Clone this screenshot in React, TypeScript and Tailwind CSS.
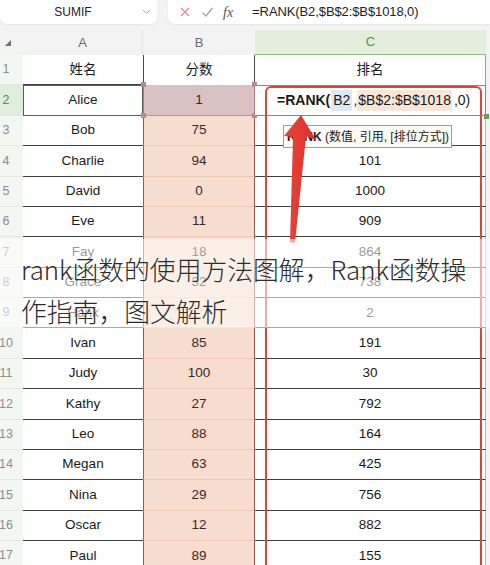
import React from "react";

type Row = { n: number; a: string; b: string; c: string };

const rows: Row[] = [
  { n: 3, a: "Bob", b: "75", c: "" },
  { n: 4, a: "Charlie", b: "94", c: "101" },
  { n: 5, a: "David", b: "0", c: "1000" },
  { n: 6, a: "Eve", b: "11", c: "909" },
  { n: 7, a: "Fay", b: "18", c: "864" },
  { n: 8, a: "Grace", b: "32", c: "738" },
  { n: 9, a: "Hank", b: "", c: "2" },
  { n: 10, a: "Ivan", b: "85", c: "191" },
  { n: 11, a: "Judy", b: "100", c: "30" },
  { n: 12, a: "Kathy", b: "27", c: "792" },
  { n: 13, a: "Leo", b: "88", c: "164" },
  { n: 14, a: "Megan", b: "63", c: "425" },
  { n: 15, a: "Nina", b: "29", c: "756" },
  { n: 16, a: "Oscar", b: "12", c: "882" },
  { n: 17, a: "Paul", b: "89", c: "155" },
];

function RowNum({ n, active }: { n: number; active?: boolean }) {
  return (
    <div
      className={`h-full flex items-center border-b border-[#e3e8e2] ${
        active ? "bg-[#dfeddb] text-[#5b8f4a]" : "bg-[#f3f7f2] text-[#8a8f8a]"
      }`}
    >
      <div className="w-[12px] flex justify-center text-[12.5px] leading-none whitespace-nowrap">{n}</div>
    </div>
  );
}

export default function App() {
  return (
    <div
      className="relative w-[490px] h-[565px] overflow-hidden bg-[#f2f3f2]"
      style={{ fontFamily: '"Liberation Sans", "Noto Sans CJK SC", sans-serif' }}
    >
      {/* Toolbar */}
      <div className="flex h-[24px] gap-[11px]">
        <div className="w-[157px] h-full bg-white rounded-b-[7px] shadow-[0_1px_2px_rgba(0,0,0,0.06)] flex items-center relative">
          <div className="flex-1 text-center text-[12px] text-[#222] pl-[4px]">SUMIF</div>
          <svg width="9" height="6" viewBox="0 0 9 6" className="mr-[6px]">
            <path d="M1 1 L4.5 4.5 L8 1" fill="none" stroke="#b0b0b0" strokeWidth="1" />
          </svg>
        </div>
        <div className="flex-1 h-full bg-white rounded-bl-[7px] shadow-[0_1px_2px_rgba(0,0,0,0.06)] flex items-center">
          <svg width="12" height="12" viewBox="0 0 12 12" className="ml-[11px]">
            <path d="M2 2 L10 10 M10 2 L2 10" stroke="#e08a8a" strokeWidth="1.3" />
          </svg>
          <svg width="13" height="12" viewBox="0 0 13 12" className="ml-[10px]">
            <path d="M1.5 6.5 L5 10 L11.5 2" fill="none" stroke="#a0a8a0" strokeWidth="1.3" />
          </svg>
          <span
            className="ml-[9px] text-[14px] italic text-[#555]"
            style={{ fontFamily: '"Liberation Serif", serif' }}
          >
            fx
          </span>
          <span className="ml-[19px] text-[13px] text-[#222] tracking-[-0.1px]">=RANK(B2,$B$2:$B$1018,0)</span>
        </div>
      </div>

      {/* Column headers */}
      <div className="mt-[6px] grid grid-cols-[23px_120px_112px_231px_4px] h-[25px] text-[13px]">
        <div className="flex items-center pl-[5px]">
          <svg width="6" height="6" viewBox="0 0 6 6">
            <path d="M6 0 L6 6 L0 6 Z" fill="#6f736f" />
          </svg>
        </div>
        <div className="flex items-center justify-center text-[#6b6b6b] border-r border-[#e2e4e2]">A</div>
        <div className="flex items-center justify-center text-[#6b6b6b]">B</div>
        <div className="flex items-center justify-center text-[#5b8f4a] bg-[#e3efdc] border-b border-[#8fbf7a]">C</div>
        <div />
      </div>

      {/* Row 1 */}
      <div className="grid grid-cols-[23px_120px_112px_231px_4px] h-[30.375px] text-[13.5px] text-[#1a1a1a]">
        <RowNum n={1} />
        <div className="bg-white flex items-center justify-center border-b border-[#3f4a3e]">姓名</div>
        <div className="bg-white flex items-center justify-center border-l border-r border-[#4a4a4a]">分数</div>
        <div className="bg-white flex items-center justify-center border-r border-[#7eb565]">排名</div>
        <div />
      </div>

      {/* Row 2 */}
      <div className="grid grid-cols-[23px_120px_112px_231px_4px] h-[30.375px] text-[13.5px] text-[#1a1a1a]">
        <RowNum n={2} active />
        <div className="bg-white flex items-center justify-center border-[1.5px] border-[#56614f]">Alice</div>
        <div className="relative bg-[#d9c1c4] flex items-center justify-center text-[#3a2a2c] border-l border-r border-[#b07b88] border-b border-b-[#c48f9c]">
          1
          <span className="absolute left-[-3px] top-[-3px] w-[5px] h-[5px] bg-[#b9899a]" />
          <span className="absolute left-[-3px] bottom-[-3px] w-[5px] h-[5px] bg-[#b9899a]" />
          <span className="absolute right-[-3px] top-[-3px] w-[5px] h-[5px] bg-[#b9899a]" />
          <span className="absolute right-[-3px] bottom-[-3px] w-[5px] h-[5px] bg-[#b9899a]" />
        </div>
        <div className="relative bg-white flex items-center border-t-[1.5px] border-b-[1.5px] border-r-[1.5px] border-[#6aa150] pl-[22px] text-[14px] whitespace-nowrap">
          <span className="font-bold">=RANK(</span>
          <span className="bg-[#dde9f4] px-[2px] mx-[1px]">B2</span>
          <span>,</span>
          <span className="bg-[#f8e6d8] px-[1px]">$B$2:$B$1018</span>
          <span className="ml-[2px]">,0)</span>
          <span className="absolute right-[-4px] bottom-[-4px] w-[5px] h-[5px] bg-[#6aa150]" />
        </div>
        <div />
      </div>

      {/* Data rows */}
      {rows.map((r) => (
        <div
          key={r.n}
          className="grid grid-cols-[23px_120px_112px_231px_4px] h-[30.375px] text-[13.5px] text-[#1a1a1a]"
        >
          <RowNum n={r.n} />
          <div className="bg-white flex items-center justify-center border-b border-[#404040]">{r.a}</div>
          <div className="bg-[#f6ddcd] flex items-center justify-center text-[#3a2a2a] border-l border-r border-[#9a5550] border-b border-b-[#ecc9b6]">
            {r.b}
          </div>
          <div className="bg-white flex items-center justify-center border-b border-[#404040] border-r border-r-[#b8b8b8]">
            {r.c}
          </div>
          <div />
        </div>
      ))}

      {/* Red annotation rectangle */}
      <div className="absolute left-[265px] top-[86px] w-[217px] h-[520px] border-[2.5px] border-[#d4483d] rounded-[6px] pointer-events-none" />

      {/* Tooltip */}
      <div className="absolute left-[283px] top-[125px] w-[169px] h-[23px] bg-[#fcfcf6] border border-[#9c9c9c] flex items-center pl-[3px] text-[12px] text-[#222] whitespace-nowrap">
        <span className="font-bold">RANK</span>
        <span>&nbsp;(数值, 引用, [排位方式])</span>
      </div>

      {/* Red arrow */}
      <svg className="absolute left-0 top-0 pointer-events-none" width="490" height="565" viewBox="0 0 490 565">
        <defs>
          <linearGradient id="ar" x1="0" y1="0" x2="1" y2="0">
            <stop offset="0" stopColor="#e8463a" />
            <stop offset="1" stopColor="#d9302a" />
          </linearGradient>
        </defs>
        <polygon
          points="301,115 316,140 306,136 295,243 290,242 293,137 284,136"
          fill="url(#ar)"
        />
      </svg>

      {/* Caption overlay */}
      <div className="absolute left-0 top-[239px] w-[490px] h-[89px] bg-[rgba(255,255,255,0.55)] pointer-events-none" />
      <div
        className="absolute left-[21px] top-[248px] text-[25.8px] leading-[42px] font-light text-[#2c2c2c] whitespace-nowrap pointer-events-none"
        style={{ fontFamily: '"Noto Sans CJK SC", "Noto Sans", sans-serif' }}
      >
        rank函数的使用方法图解，Rank函数操
        <br />
        作指南，图文解析
      </div>
    </div>
  );
}
